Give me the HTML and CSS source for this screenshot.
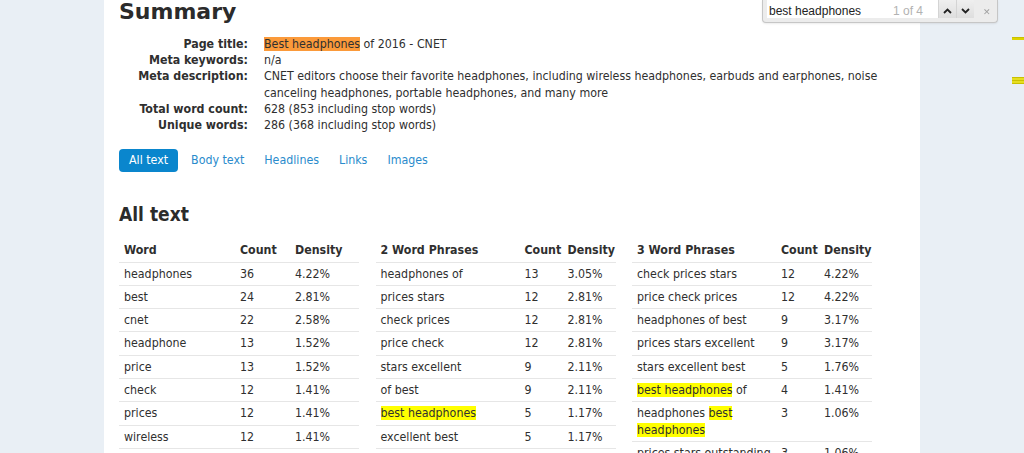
FILE: index.html
```html
<!DOCTYPE html>
<html lang="en">
<head>
    <meta charset="UTF-8">
    <meta name="viewport" content="width=device-width, initial-scale=1.0">
    <title>Word count - Best headphones of 2016</title>
    <link rel="stylesheet" href="styles.css">
</head>
<body>
    <div class="findbar">
        <div class="find-field">
            <span class="find-query">best headphones</span>
            <span class="find-count">1 of 4</span>
        </div>
        <div class="find-nav">
            <span class="find-btn">
                <svg width="9" height="6" viewBox="0 0 9 6"><path d="M1 5 L4.5 1.5 L8 5" fill="none" stroke="#222" stroke-width="1.8"/></svg>
            </span>
            <span class="find-btn">
                <svg width="9" height="6" viewBox="0 0 9 6"><path d="M1 1 L4.5 4.5 L8 1" fill="none" stroke="#222" stroke-width="1.8"/></svg>
            </span>
        </div>
        <span class="find-close">&#x2715;</span>
    </div>

    <!-- scrollbar match markers -->
    <div class="scroll-mark mark1"></div>
    <div class="scroll-mark mark2"></div>

    <div class="page">
        <h1>Summary</h1>
        <dl class="summary">
            <dt>Page title:</dt>
            <dd><mark class="current">Best headphones</mark> of 2016 - CNET</dd>
            <dt>Meta keywords:</dt>
            <dd>n/a</dd>
            <dt>Meta description:</dt>
            <dd>CNET editors choose their favorite headphones, including wireless headphones, earbuds and earphones, noise canceling headphones, portable headphones, and many more</dd>
            <dt>Total word count:</dt>
            <dd>628 (853 including stop words)</dd>
            <dt>Unique words:</dt>
            <dd>286 (368 including stop words)</dd>
        </dl>

        <nav class="tabs">
            <a href="#" class="tab active">All text</a>
            <a href="#" class="tab">Body text</a>
            <a href="#" class="tab">Headlines</a>
            <a href="#" class="tab">Links</a>
            <a href="#" class="tab">Images</a>
        </nav>

        <h2>All text</h2>

        <div class="tables">
            <table class="words">
                <colgroup><col class="c-term"><col class="c-count"><col class="c-density"></colgroup>
                <tr><th>Word</th><th>Count</th><th>Density</th></tr>
                <tr><td>headphones</td><td>36</td><td>4.22%</td></tr>
                <tr><td>best</td><td>24</td><td>2.81%</td></tr>
                <tr><td>cnet</td><td>22</td><td>2.58%</td></tr>
                <tr><td>headphone</td><td>13</td><td>1.52%</td></tr>
                <tr><td>price</td><td>13</td><td>1.52%</td></tr>
                <tr><td>check</td><td>12</td><td>1.41%</td></tr>
                <tr><td>prices</td><td>12</td><td>1.41%</td></tr>
                <tr><td>wireless</td><td>12</td><td>1.41%</td></tr>
            </table>

            <table class="phrases">
                <colgroup><col class="c-term"><col class="c-count"><col class="c-density"></colgroup>
                <tr><th>2 Word Phrases</th><th>Count</th><th>Density</th></tr>
                <tr><td>headphones of</td><td>13</td><td>3.05%</td></tr>
                <tr><td>prices stars</td><td>12</td><td>2.81%</td></tr>
                <tr><td>check prices</td><td>12</td><td>2.81%</td></tr>
                <tr><td>price check</td><td>12</td><td>2.81%</td></tr>
                <tr><td>stars excellent</td><td>9</td><td>2.11%</td></tr>
                <tr><td>of best</td><td>9</td><td>2.11%</td></tr>
                <tr><td><mark>best headphones</mark></td><td>5</td><td>1.17%</td></tr>
                <tr><td>excellent best</td><td>5</td><td>1.17%</td></tr>
            </table>

            <table class="phrases">
                <colgroup><col class="c-term"><col class="c-count"><col class="c-density"></colgroup>
                <tr><th>3 Word Phrases</th><th>Count</th><th>Density</th></tr>
                <tr><td>check prices stars</td><td>12</td><td>4.22%</td></tr>
                <tr><td>price check prices</td><td>12</td><td>4.22%</td></tr>
                <tr><td>headphones of best</td><td>9</td><td>3.17%</td></tr>
                <tr><td>prices stars excellent</td><td>9</td><td>3.17%</td></tr>
                <tr><td>stars excellent best</td><td>5</td><td>1.76%</td></tr>
                <tr><td><mark>best headphones</mark> of</td><td>4</td><td>1.41%</td></tr>
                <tr><td>headphones <mark>best headphones</mark></td><td>3</td><td>1.06%</td></tr>
                <tr><td>prices stars outstanding</td><td>3</td><td>1.06%</td></tr>
            </table>
        </div>
    </div>
</body>
</html>
```

FILE: styles.css
```css
body{
    margin: 0;
    background-color: #e9eff5;
    font-family: "DejaVu Sans Condensed", "DejaVu Sans", sans-serif;
    font-size: 12.3px;
    color: #2f2f2f;
    overflow: hidden;
}
.page{
    box-sizing: border-box;
    width: 816px;
    min-height: 453px;
    margin: 0 auto;
    padding: 0 15px;
    background-color: #fff;
}
h1{
    margin: 0 0 12px;
    font-family: "DejaVu Sans", sans-serif;
    font-size: 22px;
    line-height: 24px;
    color: #2b2b2b;
}
.summary{
    display: grid;
    grid-template-columns: 129px 1fr;
    column-gap: 16px;
    margin: 0;
    line-height: 16.2px;
}
.summary dt{
    text-align: right;
    font-weight: bold;
}
.summary dd{
    margin: 0;
}
mark{
    background-color: #ffff00;
    color: inherit;
}
mark.current{
    background-color: #fb9a3a;
}
.tabs{
    display: flex;
    margin-top: 16px;
}
.tab{
    padding: 0 10px;
    line-height: 23px;
    border-radius: 4px;
    color: #2a8bcc;
    text-decoration: none;
}
.tab.active{
    margin-right: 3px;
    background-color: #0a86cd;
    color: #fff;
}
h2{
    margin: 30px 0 0;
    font-size: 19px;
    line-height: 24px;
    color: #2b2b2b;
}
.tables{
    display: flex;
    align-items: flex-start;
    gap: 16.5px;
    margin-top: 13px;
}
table{
    width: 240px;
    table-layout: fixed;
    border-collapse: collapse;
}
th, td{
    padding: 3px 5px;
    line-height: 16.3px;
    text-align: left;
    vertical-align: top;
    border-bottom: 1px solid #e6e6e6;
}
th{
    font-weight: bold;
}
.words .c-term{ width: 116px; }
.words .c-count{ width: 55px; }
.words .c-density{ width: 69px; }
.phrases .c-term{ width: 144px; }
.phrases .c-count{ width: 43px; }
.phrases .c-density{ width: 53px; }

/* browser find bar, sits over the page */
.findbar{
    position: fixed;
    top: 0;
    left: 762px;
    box-sizing: border-box;
    width: 236px;
    height: 23px;
    padding-left: 4px;
    display: flex;
    align-items: flex-start;
    background-color: #ececec;
    border: 1px solid #c6c6c6;
    border-top: none;
    border-radius: 0 0 4px 4px;
    box-shadow: 0 1px 2px rgba(0,0,0,0.08);
    font-family: "Liberation Sans", Arial, sans-serif;
    font-size: 12px;
}
.find-field{
    box-sizing: border-box;
    width: 171px;
    height: 18px;
    padding: 0 15px 0 2px;
    display: flex;
    align-items: flex-end;
    justify-content: space-between;
    background-color: #fff;
}
.find-query{
    color: #222;
}
.find-count{
    color: #b2b2b2;
}
.find-nav{
    display: flex;
    height: 18px;
}
.find-btn{
    width: 18px;
    height: 18px;
    padding-top: 3px;
    box-sizing: border-box;
    display: flex;
    align-items: center;
    justify-content: center;
    background: linear-gradient(#efefef, #dedede);
    border-left: 1px solid #d4d4d4;
}
.find-close{
    margin-left: 9px;
    padding-top: 3px;
    line-height: 18px;
    font-size: 9px;
    color: #a0a0a0;
}
.scroll-mark{
    position: fixed;
    right: 0;
    width: 12px;
}
.mark1{
    top: 37px;
    height: 2px;
    background-color: #ddd300;
    border-top: 1px solid #c9c000;
}
.mark2{
    top: 77px;
    height: 7px;
    background: repeating-linear-gradient(#c9c000 0, #c9c000 1px, #e6de20 1px, #e6de20 3px);
}
```
